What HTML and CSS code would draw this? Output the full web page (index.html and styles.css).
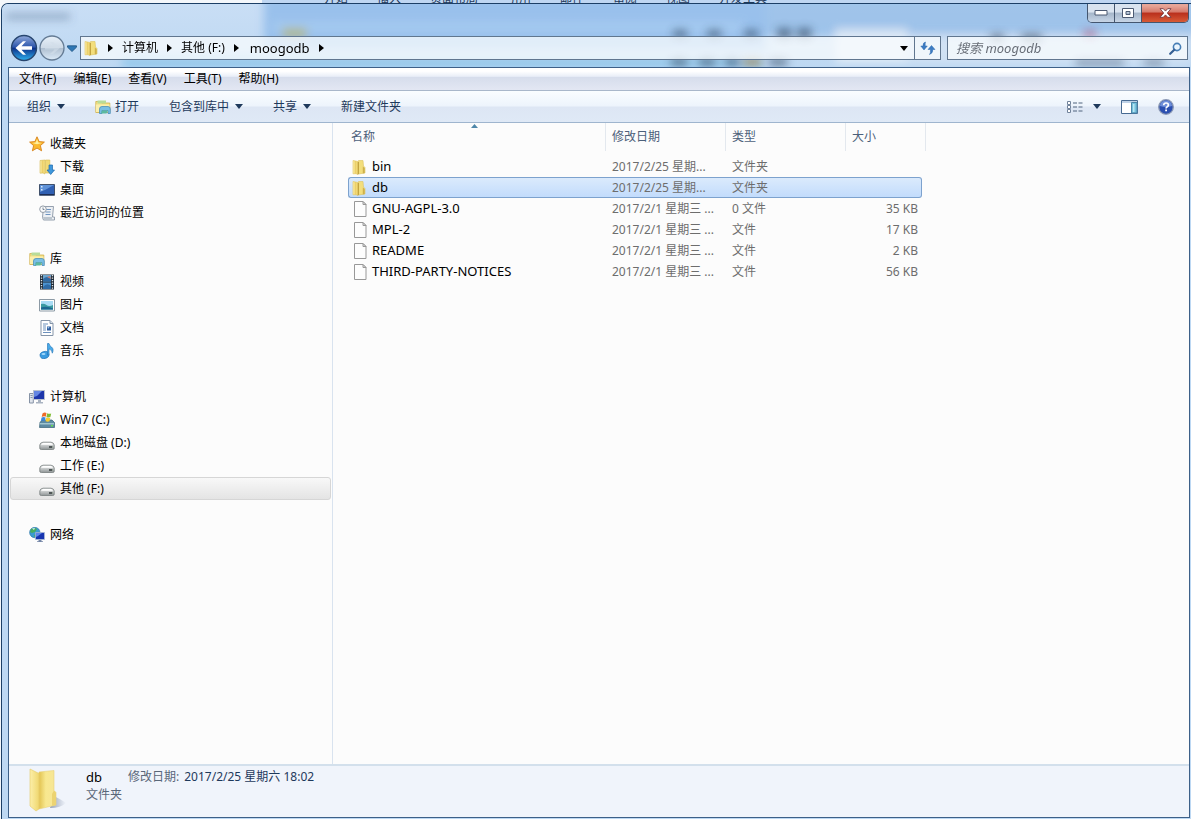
FILE: index.html
```html
<!DOCTYPE html>
<html lang="zh-CN">
<head>
<meta charset="utf-8">
<meta name="viewport" content="width=device-width, initial-scale=1">
<title>moogodb</title>
<link rel="stylesheet" href="styles.css">
</head>
<body>
<svg class="defs" aria-hidden="true">
  <defs>
    <linearGradient id="gold" x1="0" x2="1"><stop offset="0" stop-color="#fdf3b4"/><stop offset=".5" stop-color="#ecd06a"/><stop offset="1" stop-color="#f8e58c"/></linearGradient>
    <linearGradient id="leaf" x1="0" x2="1"><stop offset="0" stop-color="#fcefa9"/><stop offset="1" stop-color="#efd76f"/></linearGradient>
    <linearGradient id="inner" x1="0" x2="1"><stop offset="0" stop-color="#e2c351"/><stop offset=".4" stop-color="#f8e88f"/><stop offset="1" stop-color="#f6e596"/></linearGradient>
    <linearGradient id="metal" x1="0" y1="0" x2="0" y2="1"><stop offset="0" stop-color="#f4f5f5"/><stop offset="1" stop-color="#8f9596"/></linearGradient>
    <symbol id="folder" viewBox="0 0 16 16">
      <path d="M7.500 1.500h4.500l.5 5.500 1.500 1.500V14l-6.500 1z" fill="#f3de7c" stroke="#dcc25f" stroke-width=".6"/>
      <path d="M2 1.500 7 2.500v13l-2-.8-3 .1z" fill="url(#gold)" stroke="#e2c55c" stroke-width=".6"/>
      <path d="M6.700 3h1.200v12l-1.200.6z" fill="#bfa03a"/>
      <path d="M11.800 7.500 13.700 9v5l-1.900.4z" fill="#cdb04c"/>
    </symbol>
    <symbol id="page" viewBox="0 0 16 16">
      <path d="M3.500.5h8.500l3 3v12H3.500z" fill="#fdfdfd" stroke="#989898"/>
      <path d="M12 .5v3h3z" fill="#e4e4e4" stroke="#989898"/>
    </symbol>
    <symbol id="library" viewBox="0 0 16 16">
      <path d="M.8 2.500h5l1 1.500h8v9.500H.8z" fill="#f5e184" stroke="#cfb04c" stroke-width=".8"/>
      <path d="M2.500 1.500h8.500v3H2.500z" fill="#b8dc9a"/>
      <path d="M1 5.500h13.500v7.500H1z" fill="#fbefad"/>
      <path d="M4.500 14.500V10q0-2.500 2.500-2.500h6q2.300 0 2.300 2.500v4.500h-2.300v-3H7v3z" fill="#79bfe4" stroke="#3d85b7" stroke-width=".7"/>
      <path d="M7 11.500h6l-1.500 3H6z" fill="#5cb9a0"/>
    </symbol>
    <symbol id="star" viewBox="0 0 16 16">
      <path d="M8 .8l2.100 4.800 5.300.5-4 3.500 1.200 5.200L8 12.100l-4.600 2.700 1.200-5.200-4-3.500 5.300-.5z" fill="#fbb92e" stroke="#d6811a" stroke-width=".9" stroke-linejoin="round"/>
      <path d="M8 3l1.300 3.500 3.700.6-5 1.200-4.800-1.200L6.700 6.500z" fill="#fff0a0"/>
    </symbol>
    <symbol id="download" viewBox="0 0 16 16">
      <path d="M1 1.500 6 1v14l-2-1-3 .2z" fill="url(#gold)" stroke="#d6ba50" stroke-width=".6"/>
      <path d="M6.500 1h4.300v13H6.500z" fill="#f1da75" stroke="#d6ba50" stroke-width=".6"/>
      <path d="M10 6h3.500v5H15.500l-3.800 4.500L8 11h2z" fill="#3f98dc" stroke="#1c69ae" stroke-width=".7"/>
    </symbol>
    <symbol id="desktop" viewBox="0 0 16 16">
      <path d="M.5 2.500h15v10.800H.5z" fill="#2f5fb2" stroke="#41516b"/>
      <path d="M1 3h14L6 8 1 10z" fill="#5f92d8"/><path d="M1 12h14v1H1z" fill="#1c2d55"/><path d="M2 4h1.500v1.500H2zM2 7h1.500v1.500H2z" fill="#d9e9fa"/>
    </symbol>
    <symbol id="recent" viewBox="0 0 16 16">
      <path d="M4.500 1.500h10l-1 10.500h2v3h-11l-1-2.500z" fill="#edf0f4" stroke="#8a96a6" stroke-width=".9"/>
      <path d="M6.500 4.500h5.500M6.500 7h5M6.500 9.500h5" stroke="#6f94bf"/><path d="M4 12h9v3H5z" fill="#bcc5ce"/>
      <circle cx="4" cy="4.200" r="3.300" fill="#f9fafb" stroke="#949da8"/><path d="M4 2.500v2h1.500" fill="none" stroke="#5d6c80" stroke-width=".8"/>
    </symbol>
    <symbol id="video" viewBox="0 0 16 16">
      <path d="M1 .5h14v15H1z" fill="#202a35"/><path d="M4 1h8v6.500H4z" fill="#6da6cf"/><path d="M4 8.500h8V15H4z" fill="#4c93d0"/>
      <path d="M4 5q4-4 8 0v2.500H4zM4 13q4-5 8-1v3H4z" fill="#2f6ba6"/><path d="M8 3l3-1 1 3z" fill="#c8796e"/>
      <path d="M2.500 1v14M13.500 1v14" stroke="#dfe7ec" stroke-width="1.400" stroke-dasharray="1.300 1.200"/>
    </symbol>
    <symbol id="picture" viewBox="0 0 16 16">
      <path d="M.5 2.500h15v11.500H.5z" fill="#fff" stroke="#8c9aa5"/><path d="M2 4h12v8.500H2z" fill="#a9dcf5"/>
      <path d="M2 7q3-1 5.500 1T14 8v4.500H2z" fill="#3b9ba2"/><path d="M2 10.500q6-2 12 1v1H2z" fill="#1d6791"/>
    </symbol>
    <symbol id="document" viewBox="0 0 16 16">
      <path d="M2 .5h9l3 3v12H2z" fill="#fff" stroke="#8494a8"/><path d="M11 .5v3h3" fill="#dce5ef" stroke="#8494a8"/>
      <path d="M4 4h5M4 6h3M4 8h3M4 10h3M4 12.500h8" stroke="#6d91bd"/><path d="M8 6.500h4v4H8z" fill="#315e9f"/><path d="M8.500 7h2L9 9z" fill="#9bc9ef"/>
    </symbol>
    <symbol id="music" viewBox="0 0 16 16">
      <ellipse cx="5.500" cy="12" rx="4.500" ry="3.500" transform="rotate(-14 5.500 12)" fill="#3a9be0" stroke="#1b6eb5" stroke-width=".6"/>
      <path d="M8.500 12V.5h1.500q.3 2.200 2.500 3.500 2.700 2 .8 6.200.1-3-3.300-4.400V12z" fill="#49abe9" stroke="#1b6eb5" stroke-width=".6"/><ellipse cx="4.500" cy="11" rx="2" ry="1" fill="#a5d9fa"/>
    </symbol>
    <symbol id="computer" viewBox="0 0 16 16">
      <path d="M.5 4.500h3.800v9.500H.5z" fill="#dfe4ec" stroke="#8592a5"/><path d="M1.500 6.500h2M1.500 8.500h2" stroke="#63758c" stroke-width=".7"/>
      <path d="M4.500 1.500h11v9h-11z" fill="#1c35a9" stroke="#b8c0cd"/><path d="M5 2h8l-5 5-3 1z" fill="#6486e3"/><path d="M9 11h3v2h2v1.500H7V13h2z" fill="#a9b3c1"/>
    </symbol>
    <symbol id="windrive" viewBox="0 0 16 16">
      <path d="M1 10.500 3 8h10l2.500 2.500v5H.5z" fill="#5d8aa2" stroke="#376275" stroke-width=".7"/><path d="M1 11h14v1.500H1z" fill="#9fc5d0"/><path d="M12 13h2v1.500h-2z" fill="#67e04d"/>
      <path d="M3.500 1.500Q5.500 0 7.500 1L6.700 4.700Q5 3.800 2.700 5z" fill="#ed6a27"/><path d="M8.200 1.300q2 1 4 .2l-.8 3.600q-2 .8-4-.2z" fill="#82bd36"/><path d="M2.600 5.500q2-1 4-.1l-.8 3.500q-2-.8-4 .1z" fill="#3b89dc"/><path d="M7.300 5.500q2 1 4 .2l-.8 3.600q-2 .8-4-.2z" fill="#f7cc31"/>
    </symbol>
    <symbol id="drive" viewBox="0 0 16 16">
      <path d="M.8 10Q1.200 7.500 4 7.200h8q2.800.3 3.200 2.800v3.300q0 1.200-1.500 1.200H2.300q-1.500 0-1.500-1.200z" fill="url(#metal)" stroke="#777d7e" stroke-width=".8"/>
      <path d="M2 9.800Q3 8 4.500 8h7q1.500 0 2.500 1.800z" fill="#fff"/><path d="M10 11h4v2h-4z" fill="#4f5657"/><path d="M13 11.500h1v1h-1z" fill="#d8e8d0"/>
    </symbol>
    <symbol id="network" viewBox="0 0 16 16">
      <circle cx="5.800" cy="5.500" r="5.200" fill="#3a9bd0" stroke="#2671a4" stroke-width=".6"/><path d="M2 2q4-2 6 0L6 5 3 6 1 5zM5 8l3-1v3l-2 .7z" fill="#48ac60"/><path d="M3 1.500 6 1 5 3z" fill="#d8f2fb"/>
      <path d="M6.500 5.500h9v7h-9z" fill="#1734b0" stroke="#a9bad6" stroke-width=".8"/><path d="M7 6h6l-4 3-2 1z" fill="#5d85e9"/><path d="M9.500 13h3v1.200H14V15H8v-.8h1.500z" fill="#7385a6"/>
    </symbol>
    <symbol id="caret" viewBox="0 0 8 5"><path d="M0 0h8L4 5z" fill="currentColor"/></symbol>
    <symbol id="next" viewBox="0 0 5 8"><path d="M0 0v8l5-4z" fill="currentColor"/></symbol>
  </defs>
</svg>

<div class="backdrop" aria-hidden="true">
  <span>开始</span><span>插入</span><span>页面布局</span><span>引用</span><span>邮件</span><span>审阅</span><span>视图</span><span>开发工具</span>
</div>

<div class="window">
  <header class="titlebar">
    <svg class="glass" viewBox="0 0 1187 63" preserveAspectRatio="none" aria-hidden="true">
      <defs><filter id="soft" x="-30%" y="-80%" width="160%" height="260%"><feGaussianBlur stdDeviation="4"/></filter></defs>
      <g filter="url(#soft)">
        <path d="M262-8h500v54H262z" fill="#79aee6" opacity=".6"/>
        <path d="M762-8h430v40H762z" fill="#6fa4dd" opacity=".45"/>
        <path d="M270 18h470v10H270z" fill="#a9cdf2" opacity=".7"/>
        <path d="M120 54h640v10H120z" fill="#84c2e8" opacity=".75"/>
        <path d="M4 10h64v5H4z" fill="#54708f" opacity=".55"/>
        <path d="M280 24h24v10h-24z" fill="#b3b57b" opacity=".8"/>
        <path d="M832 25h72v34h-72z" fill="#edf2f8" opacity=".7"/>
        <path d="M905 30h282v30H905z" fill="#dfeaf6" opacity=".5"/>
      </g>
      <g filter="url(#soft)" fill="#2e445f" opacity=".6">
        <path d="M670 26h14v8h-14zM704 26h14v8h-14zM741 26h14v8h-14zM774 24h14v11h-14zM794 24h14v11h-14zM668 54h16v8h-16zM696 54h16v8h-16zM722 54h14v8h-14zM766 54h18v8h-18zM987 30h13v8h-13zM1018 30h20v8h-20zM1072 56h48v5h-48zM1140 56h20v5h-20z"/>
        <path d="M740 54h18v8h-18z" fill="#a9742c"/><path d="M1080 26h12v8h-12z" fill="#a83a64" opacity=".8"/>
      </g>
    </svg>
    <div class="caption">
      <button class="cap" aria-label="最小化"><svg width="14" height="6" viewBox="0 0 14 6"><path d="M1 .5h12v4.500H1z" fill="#fff" stroke="#4d5b73"/></svg></button>
      <button class="cap" aria-label="最大化"><svg width="12" height="10" viewBox="0 0 12 10"><path fill-rule="evenodd" d="M.5.5h11v9H.5zM4 3.500h4v3H4z" fill="#fff" stroke="#4d5b73"/></svg></button>
      <button class="cap close" aria-label="关闭"><svg width="13" height="10" viewBox="0 0 13 10"><path d="M1 .7h3.300l2.200 2.400L8.700.7H12L8.300 5l3.700 4.300H8.700L6.500 6.900 4.300 9.300H1L4.700 5z" fill="#fff" stroke="#6a3038" stroke-width=".8"/></svg></button>
    </div>
    <div class="navrow">
      <div class="history">
        <button class="plain" aria-label="后退"><svg width="28" height="28" viewBox="0 0 28 28">
          <defs><linearGradient id="orb" x1="0" y1="0" x2="0" y2="1"><stop offset="0" stop-color="#91aadb"/><stop offset=".45" stop-color="#2f58ad"/><stop offset=".52" stop-color="#0d348c"/><stop offset="1" stop-color="#2fb2ef"/></linearGradient></defs>
          <circle cx="14" cy="14" r="12.500" fill="url(#orb)" stroke="#27466f" stroke-width="1.400"/><path d="M5.500 14l7.500-6.800h3l-4.500 5H22v3.600H11.500l4.500 5h-3z" fill="#fff"/></svg></button>
        <button class="plain" aria-label="前进"><svg width="28" height="28" viewBox="0 0 28 28">
          <defs><linearGradient id="orb2" x1="0" y1="0" x2="0" y2="1"><stop offset="0" stop-color="#e7f0f9"/><stop offset=".48" stop-color="#cfdbe7"/><stop offset=".52" stop-color="#b0c0d1"/><stop offset="1" stop-color="#dcebf8"/></linearGradient></defs>
          <circle cx="14" cy="14" r="12" fill="url(#orb2)" stroke="#647b94" stroke-width="1.300"/><path d="M22 14l-7-6h-3l4.500 4.500H7v3h9.500L12 20h3z" fill="#d2dde9" opacity=".6"/></svg></button>
        <button class="plain recent" aria-label="最近的页面"><svg width="10" height="7" viewBox="0 0 10 7"><path d="M.5.8h9v1.400L5 6.500.5 2.200z" fill="#2e77b5" stroke="#20527f" stroke-width=".8"/></svg></button>
      </div>
      <div class="address">
        <nav class="crumbs" aria-label="地址">
          <svg class="ico"><use href="#folder"/></svg>
          <svg class="next"><use href="#next"/></svg>
          <a href="#">计算机</a><svg class="next"><use href="#next"/></svg>
          <a href="#">其他 (F:)</a><svg class="next"><use href="#next"/></svg>
          <a class="latin" href="#">moogodb</a><svg class="next"><use href="#next"/></svg>
        </nav>
        <button class="plain addr-drop" aria-label="以前的位置"><svg class="caret"><use href="#caret"/></svg></button>
        <button class="plain refresh" aria-label="刷新"><svg width="16" height="14" viewBox="0 0 16 14"><path d="M5.500 1Q2.800 1.500 3 5H.8L4 9l3.300-4H5.200Q5 2.500 5.500 1z" fill="#3c7cc3" stroke="#2d69ad" stroke-width=".5"/><path d="M11.500 4.500 15 8.500h-2.200q.2 3.800-3.300 5 1.300-1.500 1-5H8z" fill="#3c7cc3" stroke="#2d69ad" stroke-width=".5"/></svg></button>
      </div>
      <div class="search">
        <input type="search" placeholder="搜索 moogodb" aria-label="搜索 moogodb">
        <svg width="13" height="13" viewBox="0 0 13 13" aria-hidden="true"><circle cx="8" cy="5" r="3.600" fill="#eaf5fe" stroke="#457db5" stroke-width="1.600"/><path d="M5.300 7.700 1.200 11.800" stroke="#355f93" stroke-width="2.200" stroke-linecap="round"/></svg>
      </div>
    </div>
  </header>

  <div class="client">
    <nav class="menubar" aria-label="菜单">
      <button>文件(F)</button><button>编辑(E)</button><button>查看(V)</button><button>工具(T)</button><button>帮助(H)</button>
    </nav>
    <div class="toolbar">
      <button>组织<svg class="caret"><use href="#caret"/></svg></button>
      <button class="open"><svg class="ico"><use href="#library"/></svg>打开</button>
      <button>包含到库中<svg class="caret"><use href="#caret"/></svg></button>
      <button>共享<svg class="caret"><use href="#caret"/></svg></button>
      <button>新建文件夹</button>
      <div class="tools">
        <button class="views" aria-label="更改您的视图"><svg width="16" height="12" viewBox="0 0 16 12"><path d="M.5.5h3v3h-3zM.5 4.500h3v3h-3zM.5 8.500h3v3h-3z" fill="#fff" stroke="#71839b"/><path d="M6 2h4M11.500 2h4M6 6h4M11.500 6h4M6 10h4M11.500 10h4" stroke="#50647e"/></svg><svg class="caret"><use href="#caret"/></svg></button>
        <button aria-label="显示预览窗格"><svg width="17" height="14" viewBox="0 0 17 14"><path d="M.5.5h16v13H.5z" fill="#fff" stroke="#476a92"/><path d="M1 1h15v2H1z" fill="#bfd2e7"/><path d="M10.500 2.500h5.500V13h-5.500z" fill="#77c2dd" stroke="#4c86a8"/><path d="M12 4h1.500v8H12z" fill="#b9e6f3"/></svg></button>
        <button aria-label="获取帮助"><svg width="16" height="16" viewBox="0 0 16 16"><circle cx="8" cy="8" r="7.300" fill="#2b4fb0" stroke="#8b99b5" stroke-width="1.300"/><path d="M2 7a6 5.500 0 0 1 12 0q-6 2-12 0z" fill="#6f8fd9"/><path d="M5.700 6.300Q5.800 4 8.100 4t2.300 2.100Q10.400 7.300 9 8 8.100 8.500 8.100 9.500" fill="none" stroke="#fff" stroke-width="1.700"/><path d="M7.200 10.600H9v1.700H7.200z" fill="#fff"/></svg></button>
      </div>
    </div>

    <div class="panes">
      <nav class="tree" aria-label="导航窗格">
        <ul>
          <li class="group"><svg class="ico"><use href="#star"/></svg>收藏夹</li>
          <li><svg class="ico"><use href="#download"/></svg>下载</li>
          <li><svg class="ico"><use href="#desktop"/></svg>桌面</li>
          <li><svg class="ico"><use href="#recent"/></svg>最近访问的位置</li>
        </ul>
        <ul>
          <li class="group"><svg class="ico"><use href="#library"/></svg>库</li>
          <li><svg class="ico"><use href="#video"/></svg>视频</li>
          <li><svg class="ico"><use href="#picture"/></svg>图片</li>
          <li><svg class="ico"><use href="#document"/></svg>文档</li>
          <li><svg class="ico"><use href="#music"/></svg>音乐</li>
        </ul>
        <ul>
          <li class="group"><svg class="ico"><use href="#computer"/></svg>计算机</li>
          <li><svg class="ico"><use href="#windrive"/></svg>Win7 (C:)</li>
          <li><svg class="ico"><use href="#drive"/></svg>本地磁盘 (D:)</li>
          <li><svg class="ico"><use href="#drive"/></svg>工作 (E:)</li>
          <li class="current"><svg class="ico"><use href="#drive"/></svg>其他 (F:)</li>
        </ul>
        <ul>
          <li class="group"><svg class="ico"><use href="#network"/></svg>网络</li>
        </ul>
      </nav>

      <main class="files">
        <table>
          <colgroup><col class="c-name"><col class="c-date"><col class="c-type"><col class="c-size"><col class="c-end"></colgroup>
          <thead><tr><th class="sorted">名称<svg width="7" height="4" viewBox="0 0 7 4" aria-hidden="true"><path d="M0 4 3.500 0 7 4z" fill="#4f87a9"/></svg></th><th>修改日期</th><th>类型</th><th>大小</th><td></td></tr></thead>
          <tbody>
            <tr><td><span class="name"><svg class="ico"><use href="#folder"/></svg>bin</span></td><td>2017/2/25 星期...</td><td>文件夹</td><td></td><td></td></tr>
            <tr class="selected"><td><span class="name"><svg class="ico"><use href="#folder"/></svg>db</span></td><td>2017/2/25 星期...</td><td>文件夹</td><td></td><td></td></tr>
            <tr><td><span class="name"><svg class="ico"><use href="#page"/></svg>GNU-AGPL-3.0</span></td><td>2017/2/1 星期三 ...</td><td>0 文件</td><td>35 KB</td><td></td></tr>
            <tr><td><span class="name"><svg class="ico"><use href="#page"/></svg>MPL-2</span></td><td>2017/2/1 星期三 ...</td><td>文件</td><td>17 KB</td><td></td></tr>
            <tr><td><span class="name"><svg class="ico"><use href="#page"/></svg>README</span></td><td>2017/2/1 星期三 ...</td><td>文件</td><td>2 KB</td><td></td></tr>
            <tr><td><span class="name"><svg class="ico"><use href="#page"/></svg>THIRD-PARTY-NOTICES</span></td><td>2017/2/1 星期三 ...</td><td>文件</td><td>56 KB</td><td></td></tr>
          </tbody>
        </table>
      </main>
    </div>

    <footer class="details">
      <svg width="40" height="44" viewBox="0 0 40 44" aria-hidden="true">
        <defs>
          <linearGradient id="shade" x1="0" x2="1"><stop offset="0" stop-color="#7d8ba5" stop-opacity=".8"/><stop offset="1" stop-color="#8794ab" stop-opacity="0"/></linearGradient>
        </defs>
        <path d="M27 28q8 4 12 7-5 5-16 5z" fill="url(#shade)"/>
        <path d="M12 4l15-1.500v20l2 2V37L12 41z" fill="url(#inner)" stroke="#ead27a" stroke-width=".6"/>
        <path d="M27 22.500l2 2V37l-4 .8V26z" fill="#ecd371"/>
        <path d="M3 1 12 5.500V41l-3 2-6-5z" fill="url(#leaf)" stroke="#e5cb67" stroke-width=".6"/>
      </svg>
      <div class="info">
        <div class="line"><span class="title">db</span><span><span class="label">修改日期:</span>2017/2/25 星期六 18:02</span></div>
        <div class="label">文件夹</div>
      </div>
    </footer>
  </div>
</div>
</body>
</html>
```
FILE: styles.css
```css
* { box-sizing: border-box; }

body {
  margin: 0;
  height: 100vh;
  display: flex;
  flex-direction: column;
  overflow: hidden;
  background: linear-gradient(90deg, #f4f7fb 0 262px, #bfd6f2 262px);
  color: #000;
  font: 12px/18px "Noto Sans", "Noto Sans CJK SC", sans-serif;
}

button, input { font: inherit; color: inherit; }
button { border: 0; padding: 0; background: none; white-space: nowrap; }
svg { display: block; flex: none; }
ul { list-style: none; margin: 0; padding: 0; }

.defs { position: absolute; width: 0; height: 0; }
.ico { width: 16px; height: 16px; }
.caret { width: 8px; height: 5px; }
.next { width: 5px; height: 8px; }
.latin { font-size: 13px; }

.backdrop {
  height: 3px;
  flex: none;
  overflow: hidden;
  display: flex;
  align-items: flex-end;
  gap: 29px;
  padding-left: 324px;
  color: #1e395b;
  line-height: 8px;
}

.window {
  flex: 1;
  min-height: 0;
  display: flex;
  flex-direction: column;
  margin-left: 1px;
  padding: 0 1px 1px 6px;
  border: solid #1c3f66;
  border-width: 1px 0 0 1px;
  border-radius: 7px 0 0 0;
  background: #bdd8f3;
}

.titlebar {
  position: relative;
  flex: none;
  height: 63px;
  margin: 0 -1px 0 -6px;
  padding: 0 2px 0 8px;
  border-radius: 6px 0 0 0;
  overflow: hidden;
  background: linear-gradient(180deg, #c9def5, #bdd8f2);
}
.glass { position: absolute; inset: 0; width: 100%; height: 100%; }

.caption {
  position: relative;
  width: max-content;
  margin-left: auto;
  display: flex;
  border: 1px solid #44566f;
  border-top: 0;
  border-radius: 0 0 5px 5px;
  overflow: hidden;
}
.cap {
  width: 27px;
  height: 18px;
  display: flex;
  justify-content: center;
  align-items: center;
  border-right: 1px solid #44566f;
  background: linear-gradient(180deg, #d9e3ef 0 45%, #a5b6ca 50%, #c7d5e6);
}
.close {
  width: 46px;
  border-right: 0;
  background: linear-gradient(180deg, #e7a597 0 10%, #d5796a 45%, #b92f1c 50%, #d75a36);
}

.navrow { position: relative; display: flex; align-items: center; gap: 6px; margin: 11px 1px 0 0; }
.history { display: flex; align-items: center; width: 64px; }
.recent { margin-left: 1px; }

.address, .search {
  display: flex;
  align-items: center;
  height: 24px;
  border: 1px solid #60768f;
  background: rgba(250, 252, 254, .75);
}
.address { flex: 1; }
.crumbs { flex: 1; display: flex; align-items: center; gap: 9px; padding-left: 2px; }
.crumbs a { color: #000; text-decoration: none; }
.crumbs .latin { margin-left: 2px; }
.addr-drop { width: 20px; display: flex; justify-content: center; }
.refresh {
  width: 26px;
  align-self: stretch;
  display: flex;
  justify-content: center;
  align-items: center;
  border-left: 1px solid #60768f;
}
.search { width: 241px; padding: 0 5px 0 8px; }
.search input {
  flex: 1;
  min-width: 0;
  padding: 0;
  border: 0;
  outline: 0;
  background: none;
  font-size: 13px;
  font-style: italic;
}
.search input::placeholder { color: #686e77; opacity: 1; }

.client {
  flex: 1;
  min-height: 0;
  display: flex;
  flex-direction: column;
  border: 1px solid #3d6088;
  background: #fcfcfc;
}

.menubar {
  display: flex;
  gap: 17px;
  height: 23px;
  flex: none;
  padding-left: 10px;
  border-bottom: 1px solid #a9b7ca;
  background: linear-gradient(180deg, #fff 0 15%, #e9eef8 38%, #d6ddec 42%, #e3e7f3);
}

.toolbar {
  display: flex;
  gap: 30px;
  height: 32px;
  flex: none;
  padding: 0 15px 0 18px;
  border-bottom: 1px solid #9fb5ce;
  background: linear-gradient(180deg, #fafdff, #edf4fc 48%, #dde6f4 52%, #dfe9f6);
  color: #1e395b;
}
.toolbar button { display: flex; align-items: center; gap: 6px; }
.toolbar .open { gap: 4px; }
.tools { display: flex; gap: 20px; margin-left: auto; }
.toolbar .views { gap: 10px; }

.panes { flex: 1; min-height: 0; display: flex; }

.tree {
  width: 324px;
  flex: none;
  display: flex;
  flex-direction: column;
  gap: 23px;
  padding: 9px 1px 0 1px;
  border-right: 1px solid #d9e3ef;
}
.tree li {
  display: flex;
  align-items: center;
  gap: 5px;
  height: 23px;
  padding-left: 28px;
  border: 1px solid transparent;
  border-radius: 3px;
}
.tree .group { padding-left: 18px; }
.tree .current { border-color: #d6d6d6; background: linear-gradient(180deg, #f8f8f8, #e4e4e4); }

.files { flex: 1; min-width: 0; padding-left: 15px; }
.files table { table-layout: fixed; width: 578px; border-collapse: separate; border-spacing: 0; }
.c-name { width: 258px; }
.c-date, .c-type { width: 120px; }
.c-size { width: 76px; }
.c-end { width: 4px; }
.files th, .files td { padding: 0 4px 0 6px; text-align: left; white-space: nowrap; }
.files th {
  position: relative;
  height: 28px;
  font-weight: normal;
  color: #4c607a;
  border-right: 1px solid #e3e8ee;
}
.files th:first-child { padding-left: 3px; }
.files th:nth-child(4) { border-right: 0; }
.files thead td { padding: 0; border-right: 1px solid #e3e8ee; }
.sorted svg { position: absolute; left: 50%; top: 1px; margin-left: -6px; }
.files tbody::before { content: ""; display: block; height: 5px; }
.files tbody td { height: 21px; border: solid transparent; border-width: 1px 0; color: #6d6d6d; line-height: 19px; }
.files tbody td:first-child { padding-left: 3px; color: #000; }
.files tbody td:nth-child(4) { text-align: right; }
.files tbody td:last-child { padding: 0; }
.name { display: flex; align-items: center; gap: 5px; font-size: 13px; }
.files .selected td:not(:last-child) {
  border-color: #7da2ce;
  background: linear-gradient(180deg, #dcebfc, #c1dbfc) border-box;
}
.files .selected td:first-child { border-left: 1px solid #7da2ce; border-radius: 3px 0 0 3px; padding-left: 2px; }
.files .selected td:nth-child(4) { border-right: 1px solid #7da2ce; border-radius: 0 3px 3px 0; }

.details {
  display: flex;
  align-items: flex-start;
  gap: 19px;
  height: 53px;
  flex: none;
  padding: 2px 0 0 18px;
  border-top: 2px solid #d3e0ec;
  background: #f0f4fb;
  color: #1e395b;
}
.line { display: flex; gap: 26px; }
.title { color: #000; font-size: 13px; }
.label { color: #5a6779; }
.line .label { margin-right: 5px; }
```
